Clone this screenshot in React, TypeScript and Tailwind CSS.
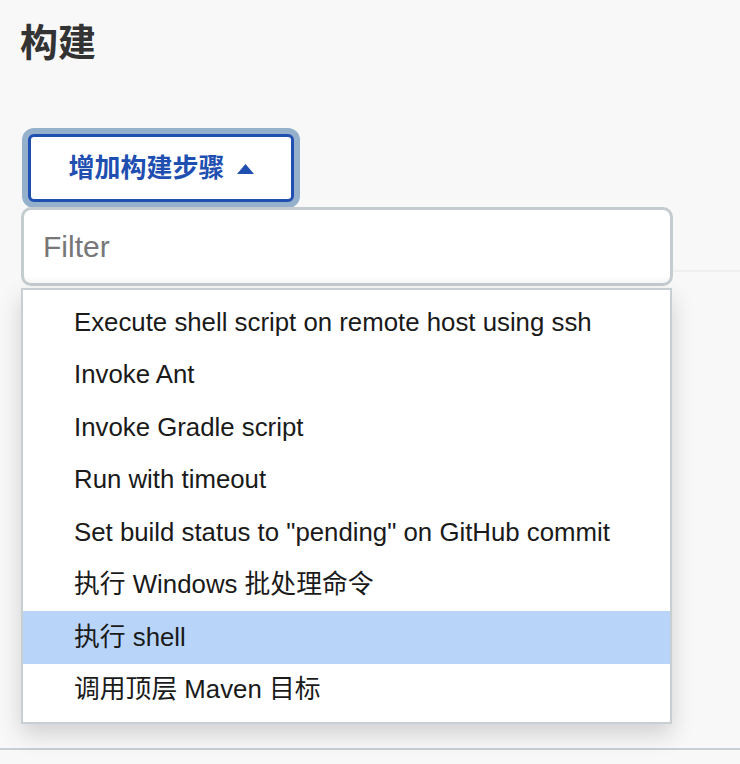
const steps = [
    "Execute shell script on remote host using ssh",
    "Invoke Ant",
    "Invoke Gradle script",
    "Run with timeout",
    'Set build status to "pending" on GitHub commit',
    "执行 Windows 批处理命令",
    "执行 shell",
    "调用顶层 Maven 目标",
];

const ACTIVE = 6;

export default function App() {
    return (
        <div className="relative h-[764px] w-[740px] overflow-hidden bg-[#f8f8f8] font-['Liberation_Sans','Noto_Sans_CJK_SC',sans-serif]">
            <h2 className="pl-[20px] pt-[21px] text-[38px] font-bold leading-[44px] text-[#333]">
                构建
            </h2>

            <div className="pl-[28px] pt-[69px]">
                <button className="flex h-[68px] w-[266px] items-center justify-center gap-[12px] rounded-[6px] border-[3px] border-[#1f4fb1] bg-white text-[26px] font-bold text-[#1f4fb1] shadow-[0_0_0_6px_#94b0cb]">
                    <span className="leading-none">增加构建步骤</span>
                    <svg width="17" height="10" viewBox="0 0 17 10" className="mt-[1px]">
                        <path d="M8.5 0 L17 10 L0 10 Z" fill="#1f4fb1" />
                    </svg>
                </button>
            </div>

            <div className="mt-[68px] ml-[21px] h-[2px] bg-[#efefef]" />
            <div className="mt-[476px] h-[2px] bg-[#c8cfd3]" />

            <div className="absolute left-[21px] top-[207px] w-[652px]">
                <div className="flex h-[79px] items-center rounded-[10px] border-[3px] border-[#c5ccd0] bg-white pl-[19px] shadow-[inset_0_-6px_8px_-6px_rgba(0,0,0,0.06)]">
                    <span className="text-[30px] text-[#777]">Filter</span>
                </div>
                <ul className="mt-[2px] w-[651px] border-2 border-[#c8cfd3] bg-white py-[6px] shadow-[0_10px_22px_rgba(0,0,0,0.16)]">
                    {steps.map((s, i) => (
                        <li
                            key={s}
                            className={`flex h-[52.5px] items-center pl-[51px] text-[25.8px] text-[#1a1a1a] ${
                                i === ACTIVE ? "bg-[#b8d4f8]" : ""
                            }`}
                        >
                            {s}
                        </li>
                    ))}
                </ul>
            </div>
        </div>
    );
}
